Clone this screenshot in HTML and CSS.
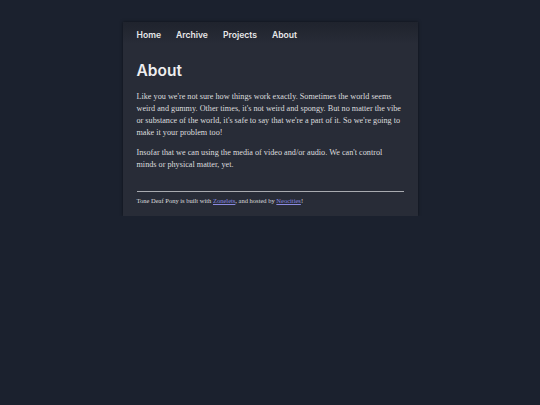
FILE: index.html
```html
<!DOCTYPE html>
<html>
<head>
<meta charset="utf-8">
<link rel="stylesheet" href="styles.css">
</head>
<body>
<div class="card">
  <nav class="nav">
    <a href="#">Home</a>
    <a href="#">Archive</a>
    <a href="#">Projects</a>
    <a href="#">About</a>
  </nav>
  <main class="content">
    <h1 class="title">About</h1>
    <p>Like you we're not sure how things work exactly. Sometimes the world seems weird and gummy. Other times, it's not weird and spongy. But no matter the vibe or substance of the world, it's safe to say that we're a part of it. So we're going to make it your problem too!</p>
    <p>Insofar that we can using the media of video and/or audio. We can't control minds or physical matter, yet.</p>
    <hr class="rule">
    <footer class="footer">Tone Deaf Pony is built with <a href="#">Zonelets</a>, and hosted by <a href="#">Neocities</a>!</footer>
  </main>
</div>
</body>
</html>
```
FILE: styles.css
```css
html, body {
  margin: 0;
  padding: 0;
  background: #1b212e;
}
body {
  padding-top: 22px;
}
.card {
  width: 295px;
  margin: 0 auto;
  background: #282c37;
  box-shadow: 0 0 3px rgba(0,0,0,0.5);
}
.nav {
  display: flex;
  gap: 15px;
  height: 22px;
  box-sizing: border-box;
  align-items: center;
  padding: 3px 14px 0;
  background: linear-gradient(#1f232d, #282c37);
  font-family: Inter, "Noto Sans", sans-serif;
  font-weight: 600;
  font-size: 8.6px;
}
.nav a {
  color: #e8e8ea;
  text-decoration: none;
}
.content {
  padding: 17px 14px 10px;
  color: #dcdcde;
  font-family: "Liberation Serif", serif;
  font-size: 8.2px;
  line-height: 12px;
}
.title {
  margin: 0 0 10px;
  font-family: Inter, "Noto Sans", sans-serif;
  font-weight: 600;
  font-size: 15.5px;
  line-height: 20px;
  color: #eeeeef;
}
.content p {
  margin: 0 0 8px;
}
.rule {
  border: 0;
  border-top: 1px solid #a9abb0;
  margin: 20px 0 4px;
}
.footer {
  font-size: 6.5px;
  line-height: 10px;
}
.footer a {
  color: #8a8ae0;
}
```
